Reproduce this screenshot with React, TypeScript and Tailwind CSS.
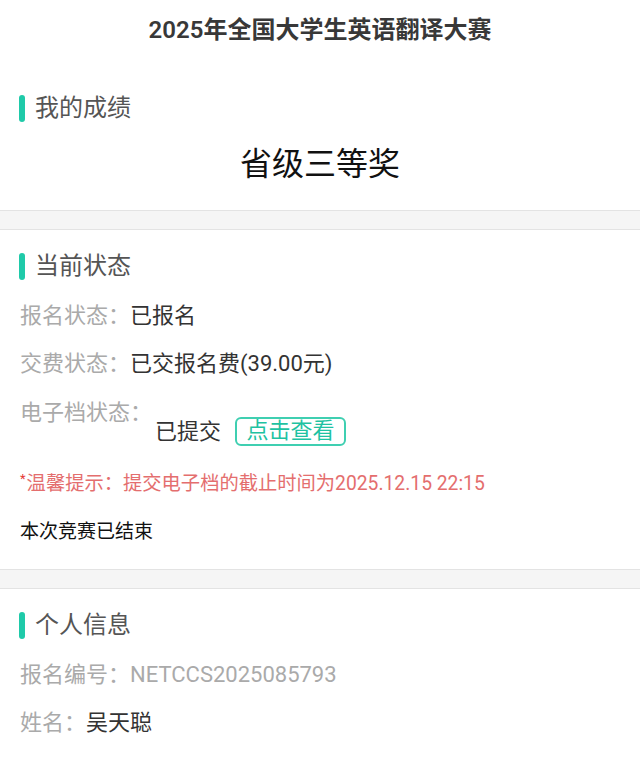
const font = { fontFamily: 'Roboto, "Noto Sans CJK SC", "Noto Sans", sans-serif' };

function SectionTitle({ children }: { children: string }) {
  return (
    <div className="flex h-[28px] items-center px-[19px]">
      <span className="h-[27px] w-[6px] rounded-full bg-[#1fcaa9]" />
      <span className="ml-[10px] text-[24px] leading-[28px] text-[#555]">{children}</span>
    </div>
  );
}

function Row({ label, value, muted }: { label: string; value: string; muted?: boolean }) {
  return (
    <div className="flex h-[48px] items-center px-[20px] text-[22px]">
      <span className="text-[#aaa]">{label}</span>
      <span className={muted ? "text-[#aaa]" : "text-[#333]"}>{value}</span>
    </div>
  );
}

function Divider() {
  return <div className="h-[20px] border-y border-[#e3e3e3] bg-[#f5f5f5]" />;
}

export default function App() {
  return (
    <div className="min-h-[757px] w-[640px] bg-white" style={font}>
      <div className="flex h-[60px] items-center justify-center">
        <h1 className="text-[24px] font-semibold text-[#383838]">2025年全国大学生英语翻译大赛</h1>
      </div>

      <section className="pt-[34px]">
        <SectionTitle>我的成绩</SectionTitle>
        <div className="mt-[22px] flex h-[40px] items-center justify-center text-[32px] text-[#111]">
          省级三等奖
        </div>
        <div className="h-[26px]" />
      </section>

      <Divider />

      <section className="pt-[22px]">
        <SectionTitle>当前状态</SectionTitle>
        <div className="mt-[11px]">
          <Row label="报名状态：" value="已报名" />
          <Row label="交费状态：" value="已交报名费(39.00元)" />
          <div className="flex items-start px-[20px] text-[22px]">
            <span className="mt-[2px] leading-[48px] text-[#aaa]">电子档状态：</span>
            <div className="ml-[3px] mt-[29px] flex h-[30px] items-center gap-[14px]">
              <span className="text-[#333]">已提交</span>
              <button
                type="button"
                className="flex h-[29px] w-[111px] items-center justify-center rounded-[6px] border-2 border-[#3fcfb1] text-[22px] leading-none text-[#1fc2a2]"
              >
                点击查看
              </button>
            </div>
          </div>
        </div>
        <p className="mt-[26px] flex items-start px-[20px] text-[19.3px] leading-[24px] text-[#e46e6e]">
          <span className="mr-[1px] -mt-[5px] text-[13px] text-[#e53935]">*</span>
          温馨提示：提交电子档的截止时间为2025.12.15 22:15
        </p>
        <p className="mt-[24px] px-[20px] text-[19px] leading-[24px] text-[#111]">本次竞赛已结束</p>
        <div className="h-[25px]" />
      </section>

      <Divider />

      <section className="pt-[22px]">
        <SectionTitle>个人信息</SectionTitle>
        <div className="mt-[11px]">
          <Row label="报名编号：" value="NETCCS2025085793" muted />
          <Row label="姓名：" value="吴天聪" />
        </div>
      </section>
    </div>
  );
}
